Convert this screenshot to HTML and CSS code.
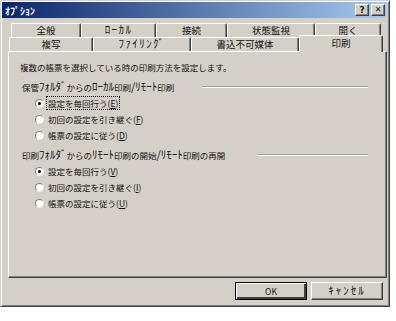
FILE: index.html
```html
<!DOCTYPE html>
<html lang="ja">
<head>
    <meta charset="utf-8">
    <title>ｵﾌﾟｼｮﾝ</title>
    <link rel="stylesheet" href="styles.css">
</head>
<body>
<div class="window">
    <div class="titlebar">
        <span class="title">ｵﾌﾟｼｮﾝ</span>
        <div class="caption-btns">
            <span class="cbtn">?</span>
            <span class="cbtn cbtn-close">✕</span>
        </div>
    </div>

    <div class="tabs">
        <div class="tabrow back">
            <div class="tab t-general">全般</div>
            <div class="tab t-local"><span class="hw">ﾛｰｶﾙ</span></div>
            <div class="tab t-conn">接続</div>
            <div class="tab t-watch">状態監視</div>
            <div class="tab t-open">開く</div>
        </div>
        <div class="tabrow front">
            <div class="tab t-copy">複写</div>
            <div class="tab t-filing"><span class="hw">ﾌｧｲﾘﾝｸﾞ</span></div>
            <div class="tab t-media">書込不可媒体</div>
            <div class="tab t-print active">印刷</div>
        </div>
    </div>

    <div class="panel">
        <p class="desc">複数の帳票を選択している時の印刷方法を設定します。</p>

        <div class="group">
            <div class="group-label"><span>保管<span class="hw">ﾌｫﾙﾀﾞ</span>からの<span class="hw">ﾛｰｶﾙ</span>印刷<span class="hw">/ﾘﾓｰﾄ</span>印刷</span><i class="etch"></i></div>
            <label class="radio"><span class="dot checked"></span><span class="focus">設定を毎回行う(<u>E</u>)</span></label>
            <label class="radio"><span class="dot"></span><span>初回の設定を引き継ぐ(<u>F</u>)</span></label>
            <label class="radio"><span class="dot"></span><span>帳票の設定に従う(<u>D</u>)</span></label>
        </div>

        <div class="group">
            <div class="group-label"><span>印刷<span class="hw">ﾌｫﾙﾀﾞ</span>からの<span class="hw">ﾘﾓｰﾄ</span>印刷の開始<span class="hw">/ﾘﾓｰﾄ</span>印刷の再開</span><i class="etch"></i></div>
            <label class="radio"><span class="dot checked"></span><span>設定を毎回行う(<u>V</u>)</span></label>
            <label class="radio"><span class="dot"></span><span>初回の設定を引き継ぐ(<u>I</u>)</span></label>
            <label class="radio"><span class="dot"></span><span>帳票の設定に従う(<u>U</u>)</span></label>
        </div>
    </div>

    <div class="buttons">
        <button class="btn default">OK</button>
        <button class="btn"><span class="hw">ｷｬﾝｾﾙ</span></button>
    </div>
</div>
</body>
</html>
```

FILE: styles.css
```css
body {
    margin: 0;
    background: #fff;
}
.window {
    width: 390px;
    height: 307px;
    box-sizing: border-box;
    background: #d4d0c8;
    border-top: 1px solid #d4d0c8;
    border-left: 1px solid #d4d0c8;
    border-right: 1px solid #404040;
    border-bottom: 1px solid #404040;
    box-shadow: inset 1px 1px 0 #fff, inset -1px -1px 0 #808080;
    padding: 1px 2px 2px 1px;
    font-family: "Noto Sans CJK JP", "Noto Sans", sans-serif;
    font-size: 8.5px;
    color: #111;
}
/* half-width kana are drawn wider in the original UI font */
.hw {
    font-size: 11px;
    line-height: 1;
}

/* title bar */
.titlebar {
    height: 16px;
    display: flex;
    align-items: center;
    justify-content: space-between;
    padding: 0 2px 0 3px;
    background: linear-gradient(to right, #0a246a, #a6caf0);
}
.title {
    color: #fff;
    font-weight: bold;
    font-size: 10px;
}
.caption-btns {
    display: flex;
    gap: 2px;
}
.cbtn {
    width: 14px;
    height: 12px;
    box-sizing: border-box;
    background: #d4d0c8;
    border-top: 1px solid #fff;
    border-left: 1px solid #fff;
    border-right: 1px solid #404040;
    border-bottom: 1px solid #404040;
    box-shadow: inset -1px -1px 0 #808080;
    display: flex;
    align-items: center;
    justify-content: center;
    font: bold 9px "DejaVu Sans", sans-serif;
    line-height: 1;
}
.cbtn-close {
    font-size: 8px;
}

/* tabs */
.tabs {
    margin-top: 5px;
}
.tabrow {
    display: flex;
    height: 14px;
}
.tabrow.back {
    padding-left: 9px;
}
.tabrow.front {
    padding-left: 7px;
}
.tab {
    box-sizing: border-box;
    height: 14px;
    border-top: 1px solid #fff;
    border-left: 1px solid #fff;
    border-right: 1px solid #404040;
    border-radius: 2px 2px 0 0;
    box-shadow: inset -1px 0 0 #808080;
    text-align: center;
    font-size: 9.5px;
    line-height: 13px;
    background: #d4d0c8;
}
.tab .hw {
    letter-spacing: 1.4px;
}
.tab.active {
    height: 17px;
    margin-top: -2px;
    margin-bottom: -1px;
    line-height: 15px;
    position: relative;
    z-index: 1;
}
.t-general { width: 70px; }
.t-local { width: 75px; }
.t-conn { width: 71px; }
.t-watch { width: 88px; }
.t-open { width: 66px; }
.t-copy { width: 84px; }
.t-filing { width: 98px; }
.t-media { width: 108px; }
.t-print { width: 84px; }

/* panel */
.panel {
    margin-left: 6px;
    width: 379px;
    height: 227px;
    box-sizing: border-box;
    border-top: 1px solid #fff;
    border-left: 1px solid #fff;
    border-right: 1px solid #404040;
    border-bottom: 1px solid #404040;
    box-shadow: inset -1px -1px 0 #808080;
    padding: 7px 18px 0 11px;
}
.desc {
    margin: 0;
    line-height: 16px;
}
.group {
    margin-top: 4px;
}
.group-label {
    display: flex;
    align-items: center;
    height: 16px;
    padding-left: 2px;
}
.etch {
    flex: 1;
    height: 0;
    margin-left: 28px;
    border-top: 1px solid #a0a0a0;
    border-bottom: 1px solid #fff;
}
.group + .group .etch {
    margin-left: 33px;
}
.radio {
    display: flex;
    align-items: center;
    height: 16px;
    padding-left: 15px;
}
.dot {
    width: 9px;
    height: 9px;
    box-sizing: border-box;
    border-radius: 50%;
    background: #fff;
    border: 1px solid #808080;
    border-right-color: #e8e8e8;
    border-bottom-color: #e8e8e8;
    margin-right: 4px;
    display: flex;
    align-items: center;
    justify-content: center;
}
.dot.checked::after {
    content: "";
    width: 3px;
    height: 3px;
    border-radius: 50%;
    background: #000;
}
.focus {
    outline: 1px dotted #000;
    line-height: 12px;
    padding: 0 1px;
    margin-left: -1px;
}
u {
    text-decoration: underline;
}

/* buttons */
.buttons {
    display: flex;
    justify-content: flex-end;
    gap: 4px;
    margin-top: 4px;
    padding-right: 4px;
}
.btn {
    width: 72px;
    height: 18px;
    padding: 0;
    background: #d4d0c8;
    font-family: "Noto Sans CJK JP", "Noto Sans", sans-serif;
    font-size: 8.5px;
    color: #111;
    border-top: 1px solid #fff;
    border-left: 1px solid #fff;
    border-right: 1px solid #404040;
    border-bottom: 1px solid #404040;
    box-shadow: inset -1px -1px 0 #808080;
}
.btn .hw {
    letter-spacing: 2px;
}
.btn.default {
    border: 1px solid #000;
    box-shadow: inset 1px 1px 0 #fff, inset -2px -2px 0 #404040;
}
```
